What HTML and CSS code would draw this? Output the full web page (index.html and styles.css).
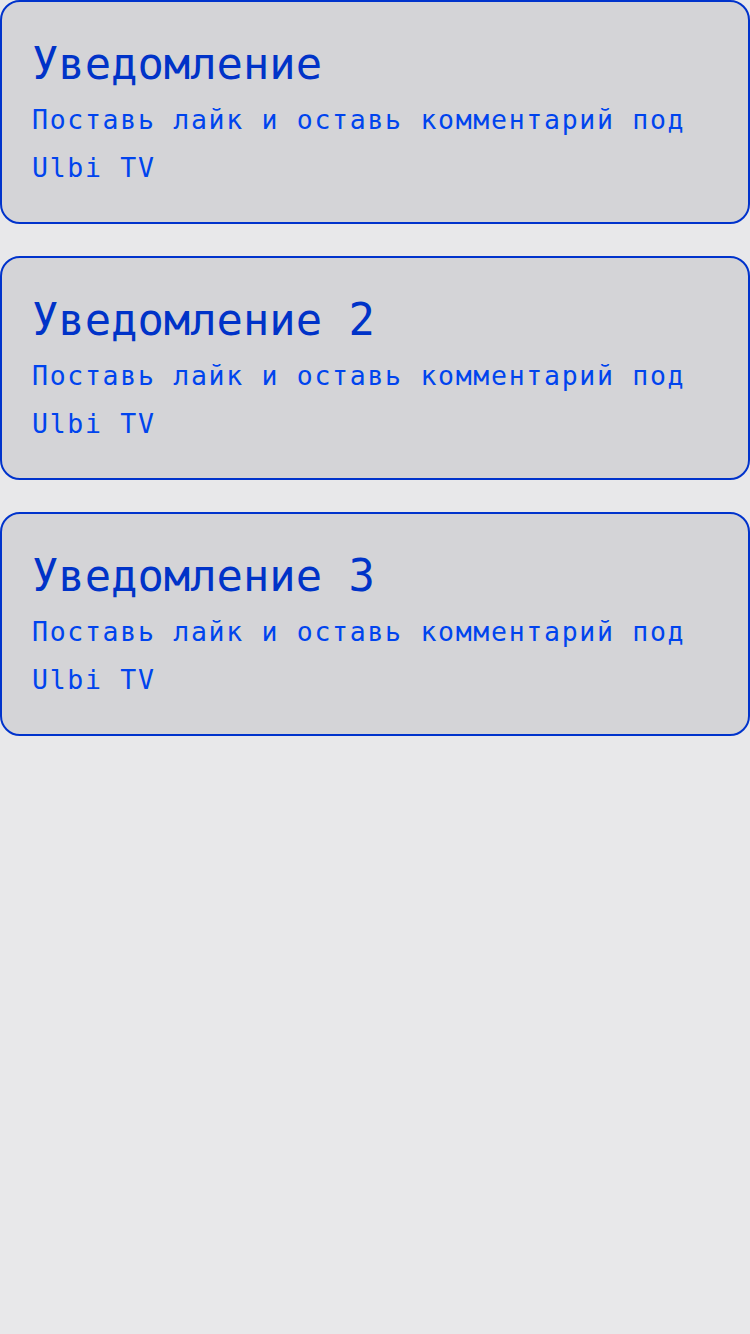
FILE: index.html
```html
<!DOCTYPE html>
<html lang="ru">
<head>
<meta charset="utf-8">
<title>Уведомления</title>
<link rel="stylesheet" href="styles.css">
</head>
<body>
<div class="list">
  <div class="card">
    <div class="title">Уведомление</div>
    <div class="text">Поставь лайк и оставь комментарий под Ulbi TV</div>
  </div>
  <div class="card">
    <div class="title">Уведомление 2</div>
    <div class="text">Поставь лайк и оставь комментарий под Ulbi TV</div>
  </div>
  <div class="card">
    <div class="title">Уведомление 3</div>
    <div class="text">Поставь лайк и оставь комментарий под Ulbi TV</div>
  </div>
</div>
</body>
</html>
```
FILE: styles.css
```css
html, body {
  margin: 0;
  padding: 0;
  background: #e8e8ea;
  min-height: 100%;
}
body {
  font-family: "DejaVu Sans Mono", monospace;
}
.list {
  display: flex;
  flex-direction: column;
  gap: 32px;
}
.card {
  background: #d4d4d7;
  border: 2px solid #0033cc;
  border-radius: 20px;
  padding: 30px;
}
.title {
  font-size: 43.8px;
  line-height: 64px;
  color: #0033c8;
}
.text {
  font-size: 26.5px;
  line-height: 48px;
  letter-spacing: 1.7px;
  color: #0044ee;
}
```
